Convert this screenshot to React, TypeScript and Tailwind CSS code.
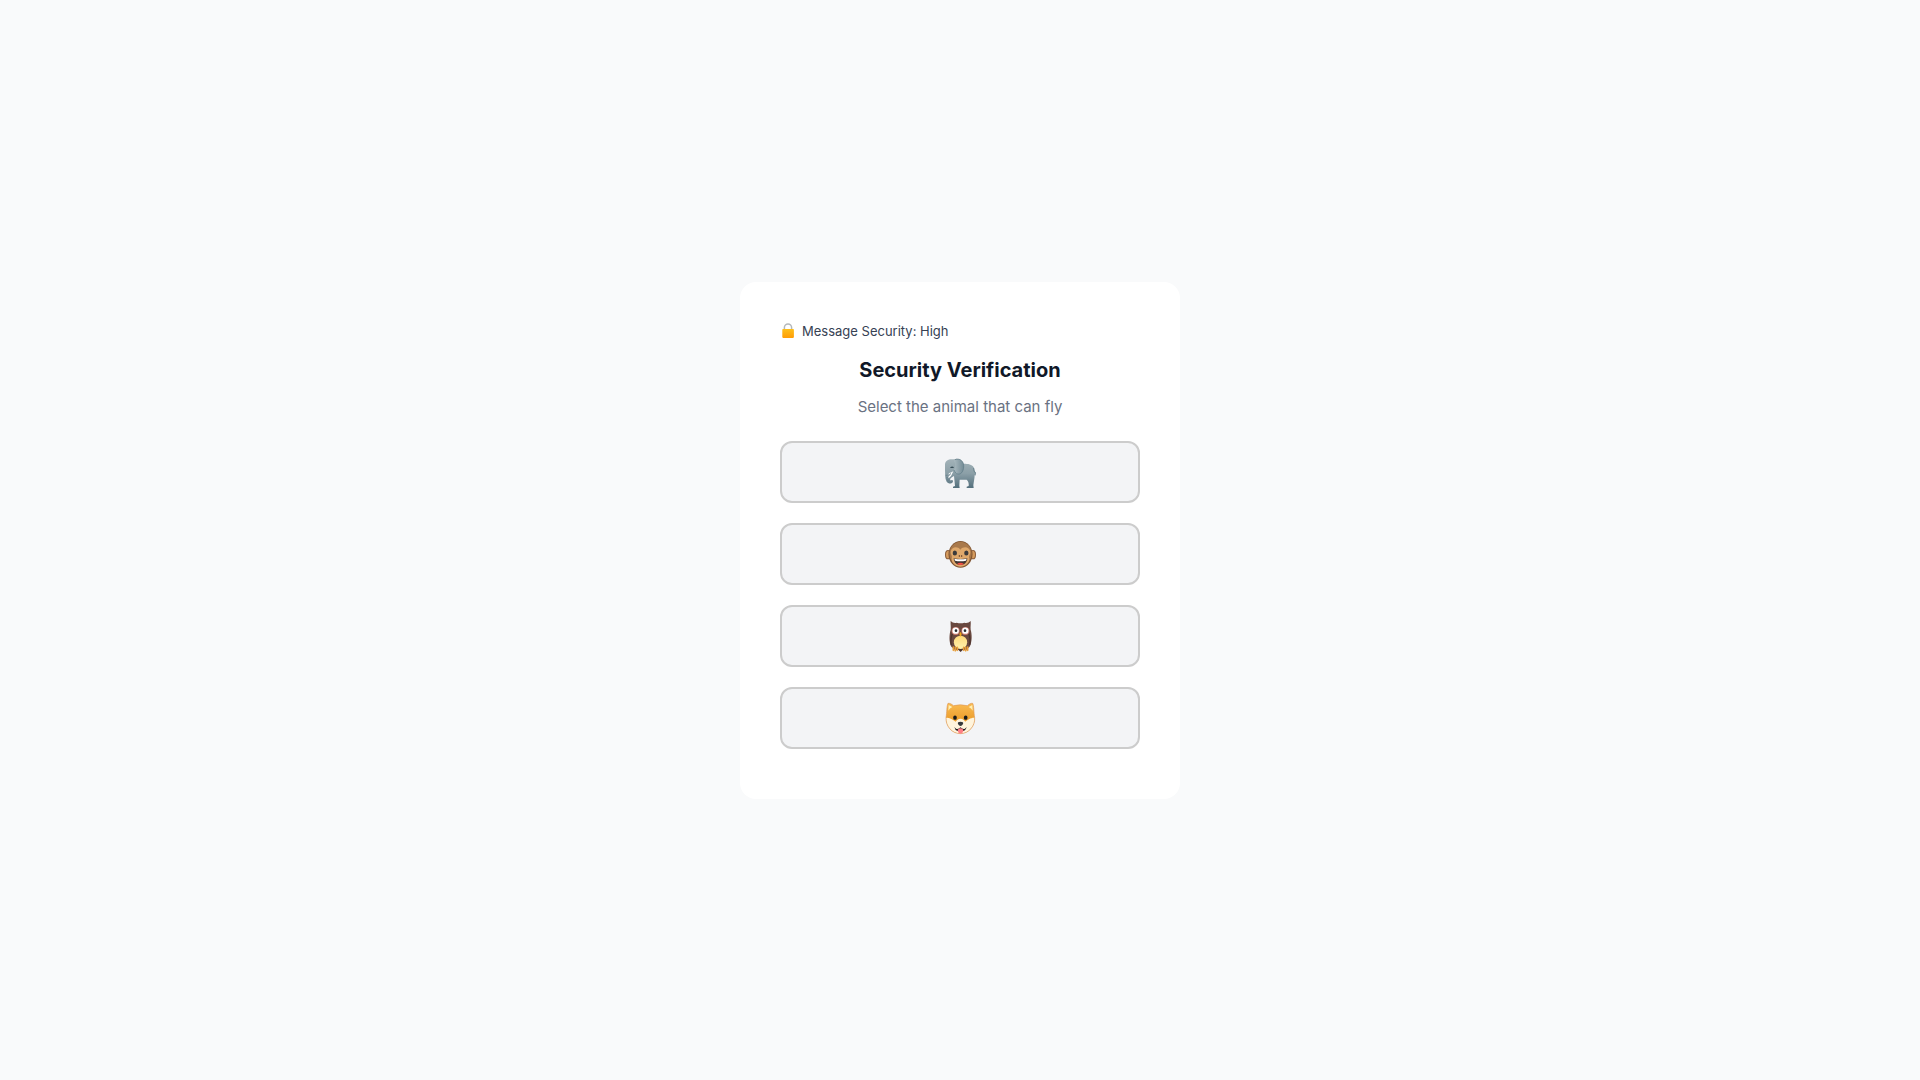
const LockIcon: React.FC = () => (
  <svg viewBox="0 0 16 16" className="size-4" aria-hidden="true">
    <defs>
      <linearGradient id="lock-body" x1="0" y1="0" x2="0" y2="1">
        <stop offset="0" stopColor="#fdc01c" />
        <stop offset="1" stopColor="#ff9d06" />
      </linearGradient>
    </defs>
    <path
      d="M4.4 7V4.6a3.6 3.6 0 0 1 7.2 0V7"
      fill="none"
      stroke="#b4b8ba"
      strokeWidth="1.5"
    />
    <rect x="2.3" y="5.9" width="11.6" height="9" rx="0.8" fill="url(#lock-body)" />
  </svg>
);

const ElephantIcon: React.FC = () => (
  <svg viewBox="6 0 108 108" className="size-9" aria-hidden="true">
    <defs>
      <linearGradient id="elephant-skin" x1="0" y1="0" x2="0" y2="1">
        <stop offset="0" stopColor="#a3b3b9" />
        <stop offset="0.5" stopColor="#8b9fa7" />
        <stop offset="1" stopColor="#536f7c" />
      </linearGradient>
      <linearGradient id="elephant-ear" x1="0" y1="0" x2="1" y2="0">
        <stop offset="0" stopColor="#a9b9bf" />
        <stop offset="1" stopColor="#738b95" />
      </linearGradient>
    </defs>
    <path
      d="M58 30C74 29 94 28 101 40C104 46 103 52 108 57C109 61 107 65 105 65L104 62C104 73 101 85 100 94L101 102H80V98L86 96C87 88 85 81 80 77H59L58 95L59 102H39V98L45 96L42 66C38 68 35 70 32 73C29 76 31 81 34 79C37 77 39 79 39 83C36 90 25 90 20 83C14 73 16 60 15 49V31C16 18 28 14 41 16C47 14 54 14 58 16Z"
      fill="url(#elephant-skin)"
    />
    <path
      d="M45 17C59 11 73 22 71 39C70 54 62 62 54 60C48 61 45 54 42 48C47 38 47 29 42 20Z"
      fill="url(#elephant-ear)"
    />
    <path
      d="M45 17C59 11 73 22 71 39C70 54 62 62 54 60C48 61 45 54 42 48"
      fill="none"
      stroke="#5c7885"
      strokeWidth="2"
    />
    <path d="M31 40Q36 35 41 39V42H31Z" fill="#374d57" />
    <path d="M40 52L36 60Q34 68 26 73Q23 67 31 63L34 55L26 62Q24 58 34 55Z" fill="#fff" />
    <path d="M17 64H22M19 71H24M21 78H26" stroke="#587380" strokeWidth="1.5" />
    <path d="M101 42Q100 55 108 58" fill="none" stroke="#536f7c" strokeWidth="2" />
  </svg>
);

const MonkeyIcon: React.FC = () => (
  <svg viewBox="6 0 108 108" className="size-9" aria-hidden="true">
    <ellipse cx="24" cy="56" rx="9" ry="14" fill="#8a5c38" />
    <ellipse cx="99" cy="56" rx="9" ry="14" fill="#8a5c38" />
    <ellipse cx="24" cy="56" rx="6" ry="11" fill="#d69c5e" />
    <ellipse cx="99" cy="56" rx="6" ry="11" fill="#d69c5e" />
    <ellipse cx="61.5" cy="55" rx="36" ry="40" fill="#805532" />
    <ellipse cx="61.5" cy="53" rx="33" ry="36" fill="#a9794b" />
    <path
      d="M61 41C53 30 34 32 32 48C32 57 38 59 35 67C34 82 47 92 61.5 92C76 92 89 82 88 67C85 59 91 57 91 48C89 32 70 30 61 41Z"
      fill="#dfa86b"
    />
    <ellipse cx="44.5" cy="51" rx="6.5" ry="7.5" fill="#3b3a3b" />
    <ellipse cx="79" cy="51" rx="6.5" ry="7.5" fill="#3b3a3b" />
    <ellipse cx="58" cy="60" rx="2" ry="3" fill="#704b30" />
    <ellipse cx="65" cy="60" rx="2" ry="3" fill="#704b30" />
    <path d="M41 67Q61 71 82 67C81 80 73 87 61.5 87C50 87 42 80 41 67Z" fill="#443530" />
    <path d="M43 68Q61 72 80 68L78 74Q61 78 45 74Z" fill="#fff" />
    <path d="M51 84Q61 76 72 84Q61 90 51 84Z" fill="#f24e43" />
  </svg>
);

const OwlIcon: React.FC = () => (
  <svg viewBox="6 6 108 108" className="size-9" aria-hidden="true">
    <defs>
      <linearGradient id="owl-belly" x1="0" y1="0" x2="0" y2="1">
        <stop offset="0" stopColor="#ffd979" />
        <stop offset="1" stopColor="#fff2ae" />
      </linearGradient>
    </defs>
    <path
      d="M32 15C37 20 44 22 50 20Q62 23 73 20C80 22 87 20 92 15C93 24 91 31 92 41C96 54 97 76 89 92L78 102H46L34 92C26 76 28 54 32 41C33 31 31 24 32 15Z"
      fill="#69483f"
    />
    <path d="M38 51Q30 69 34 87M86 51Q93 69 89 87" fill="none" stroke="#4d342e" strokeWidth="4" />
    <path d="M53 100H70L62 108Z" fill="#4b322c" />
    <circle cx="47" cy="45" r="12" fill="#c9796d" />
    <circle cx="76" cy="45" r="12" fill="#c9796d" />
    <circle cx="47" cy="44" r="9.5" fill="#fff" />
    <circle cx="76" cy="44" r="9.5" fill="#fff" />
    <circle cx="48" cy="44" r="4" fill="#292d30" />
    <circle cx="75" cy="44" r="4" fill="#292d30" />
    <ellipse cx="61.5" cy="79" rx="20" ry="20" fill="url(#owl-belly)" />
    <path d="M61.5 48C66 52 66 57 61.5 62C57 57 57 52 61.5 48Z" fill="#f5a718" />
    <path
      d="M40 93V103M46 93V104M52 94V103M71 94V103M77 93V104M83 93V103"
      stroke="#e9a13b"
      strokeWidth="5"
      strokeLinecap="round"
    />
    <path d="M43 93V103M49 94V103M74 94V103M80 93V103" stroke="#9d6339" strokeWidth="1" />
  </svg>
);

const DogIcon: React.FC = () => (
  <svg viewBox="6 6 108 108" className="size-9" aria-hidden="true">
    <defs>
      <linearGradient id="dog-fur" x1="0" y1="0" x2="0" y2="1">
        <stop offset="0" stopColor="#fbbd55" />
        <stop offset="0.65" stopColor="#e99825" />
        <stop offset="1" stopColor="#f4ae48" />
      </linearGradient>
      <clipPath id="dog-head">
        <path d="M24 16C30 15 36 19 40 23Q61 18 82 23C87 19 92 15 98 16C102 23 101 43 104 59C106 84 86 107 61.5 107C36 107 17 85 18 59C21 43 20 23 24 16Z" />
      </clipPath>
    </defs>
    <g clipPath="url(#dog-head)">
      <rect x="15" y="12" width="94" height="98" fill="url(#dog-fur)" />
      <path
        d="M17 60C28 57 40 66 47 71C51 66 54 62 61.5 62C69 62 72 66 76 71C82 66 95 57 107 60V108H17Z"
        fill="#fff4dc"
      />
    </g>
    <path
      d="M24 16C30 15 36 19 40 23Q61 18 82 23C87 19 92 15 98 16C102 23 101 43 104 59C106 84 86 107 61.5 107C36 107 17 85 18 59C21 43 20 23 24 16Z"
      fill="none"
      stroke="#dc9a5c"
      strokeWidth="2"
    />
    <path d="M26 21L37 27Q29 30 25 38Z" fill="#fff0b5" />
    <path d="M97 21L86 27Q94 30 98 38Z" fill="#fff0b5" />
    <ellipse cx="45" cy="59" rx="5.5" ry="6.5" fill="#17191a" />
    <ellipse cx="77" cy="59" rx="5.5" ry="6.5" fill="#17191a" />
    <path d="M43 87L48 92Q55 95 61.5 88Q68 95 75 92L80 87Q77 98 70 99H53Q45 97 43 87Z" fill="#17191a" />
    <path d="M53 95Q61.5 87 70 95V99Q68 107 61.5 107Q55 107 53 99Z" fill="#ff7f86" />
    <path d="M61.5 71C68 71 71 73 69 78Q66 84 61.5 84Q57 84 54 78C52 73 55 71 61.5 71Z" fill="#35393b" />
  </svg>
);

interface AnimalOption {
  readonly name: string;
  readonly Icon: React.FC;
}

const ANIMALS: ReadonlyArray<AnimalOption> = [
  { name: "Elephant", Icon: ElephantIcon },
  { name: "Monkey", Icon: MonkeyIcon },
  { name: "Owl", Icon: OwlIcon },
  { name: "Dog", Icon: DogIcon },
];

const AnimalButton: React.FC<AnimalOption> = ({ name, Icon }: AnimalOption) => {
  return (
    <button
      type="button"
      aria-label={name}
      className="flex w-full justify-center rounded-xl border-2 border-[#cccccc] bg-gray-100 px-4 py-[11px] hover:bg-gray-200"
    >
      <Icon />
    </button>
  );
};

const App: React.FC = () => {
  return (
    <main className="flex min-h-screen items-center justify-center bg-gray-50 font-['Inter',sans-serif]">
      <section className="w-full max-w-[440px] rounded-2xl bg-white px-10 pt-10 pb-[50px]">
        <div className="mb-4 flex items-center gap-1.5 text-[13px] leading-[18px] text-gray-700">
          <LockIcon />
          <span>Message Security: High</span>
        </div>
        <h1 className="mb-3 text-center text-xl font-bold text-gray-900">
          Security Verification
        </h1>
        <p className="mb-6 text-center text-[15px] leading-[21px] text-gray-500">
          Select the animal that can fly
        </p>
        <div className="flex flex-col gap-5">
          {ANIMALS.map((x) => (
            <AnimalButton key={x.name} {...x} />
          ))}
        </div>
      </section>
    </main>
  );
};

export default App;
